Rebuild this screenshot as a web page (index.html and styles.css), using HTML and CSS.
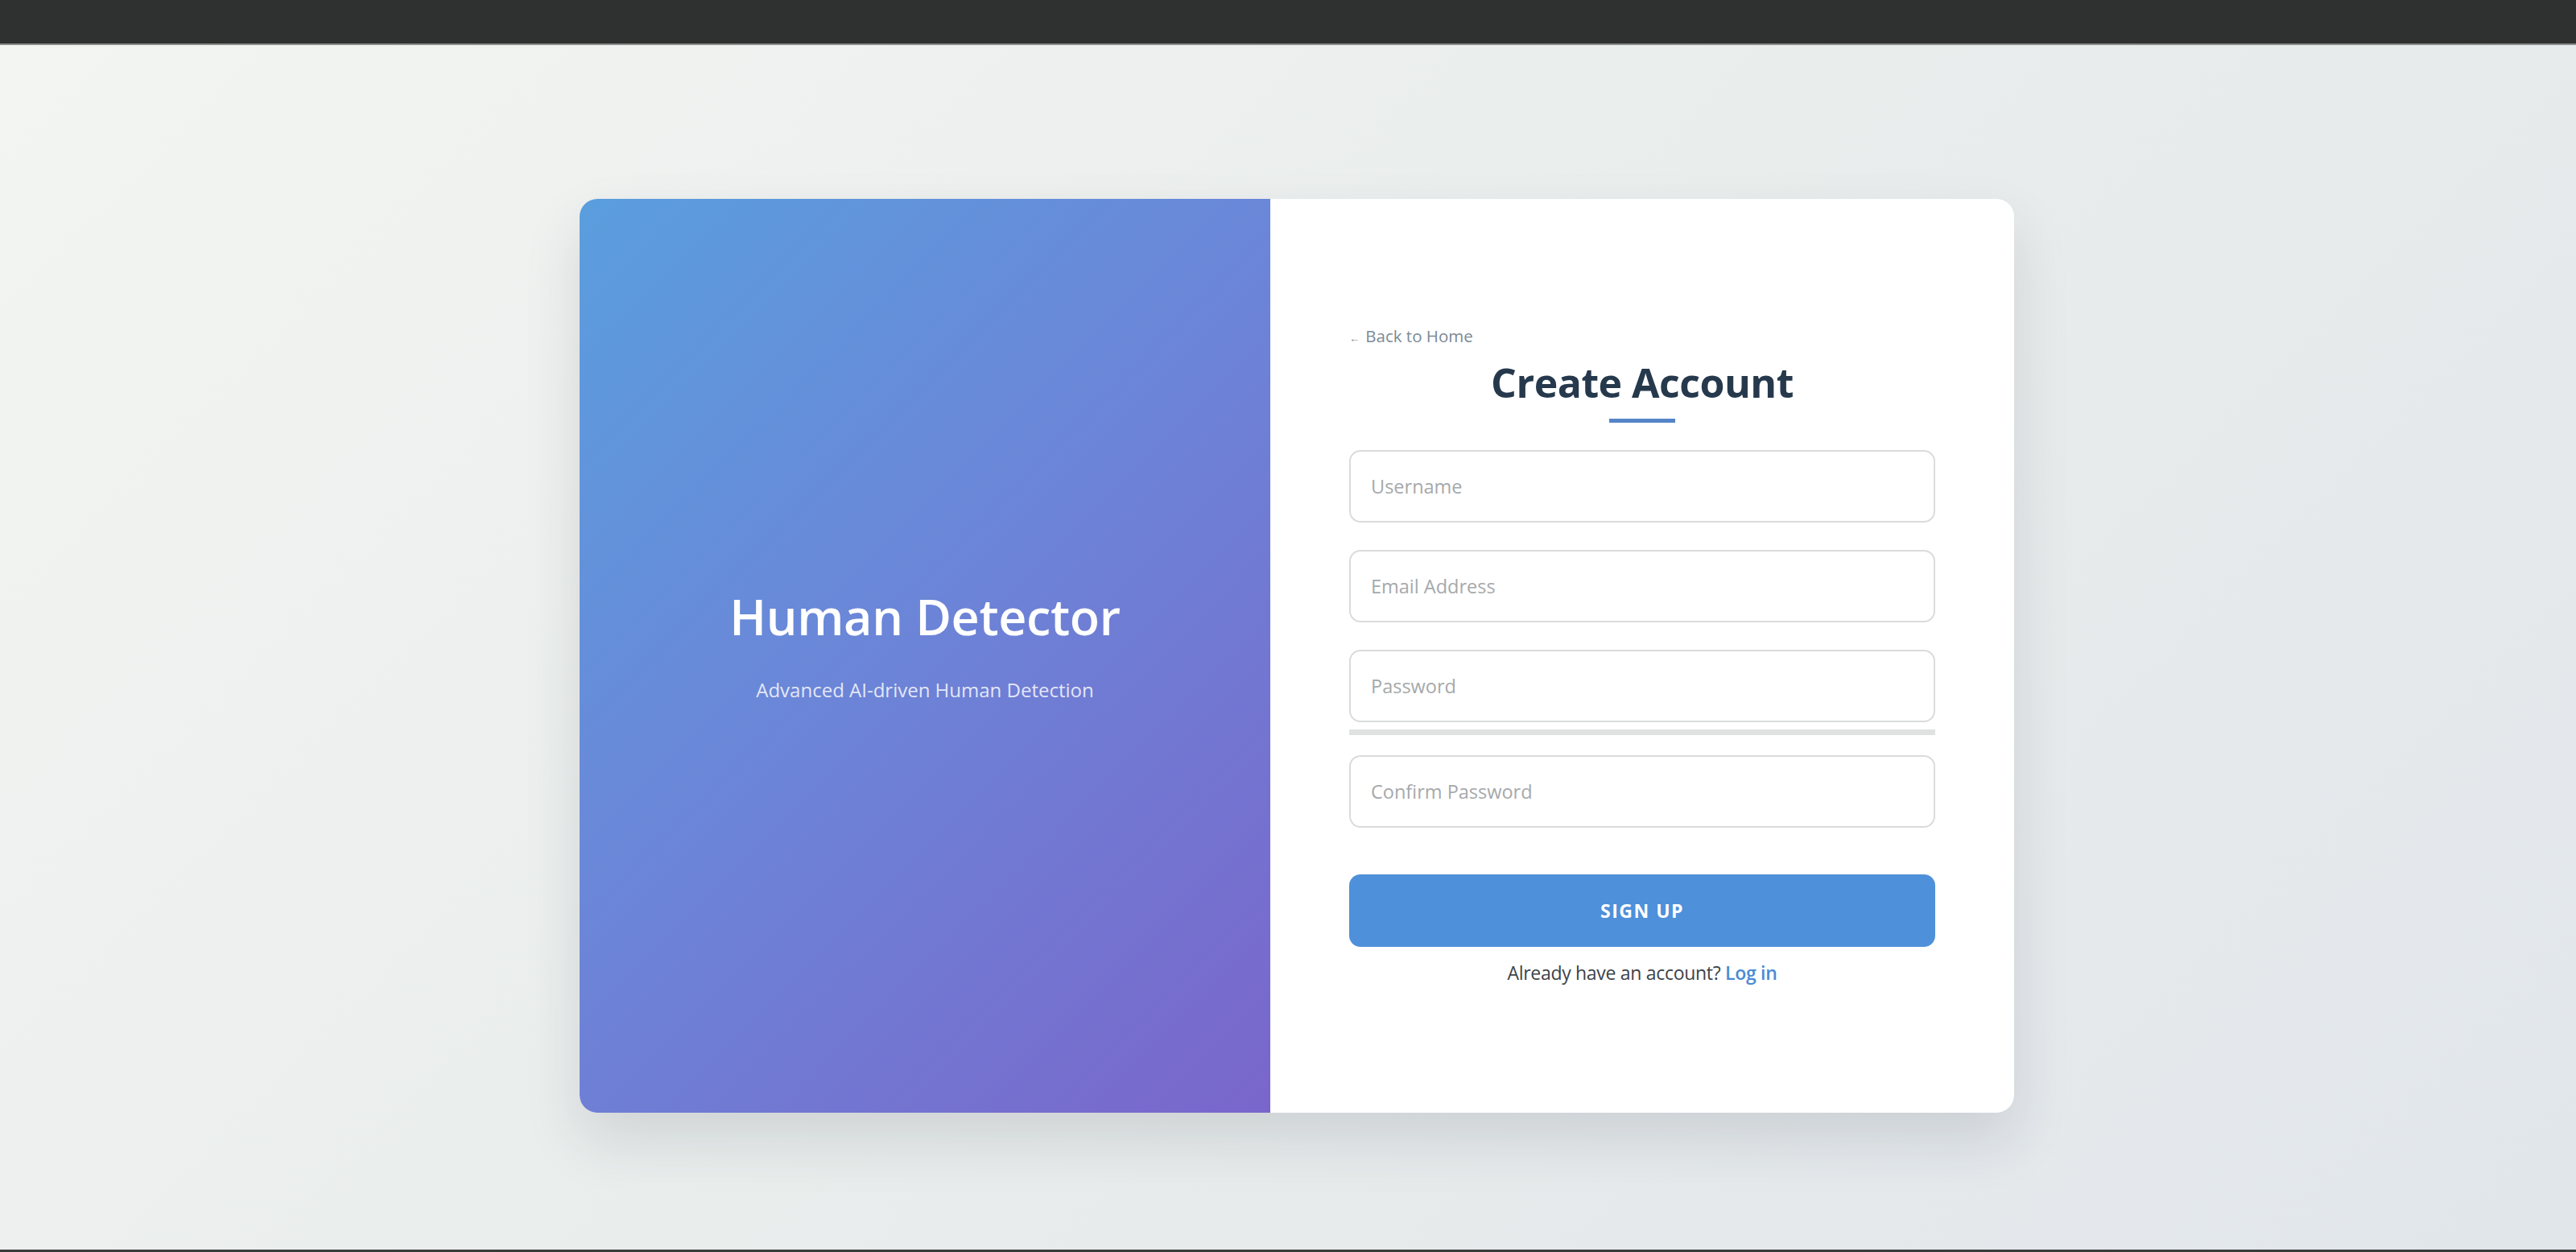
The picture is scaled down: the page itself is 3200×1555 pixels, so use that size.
FILE: index.html
```html
<!DOCTYPE html>
<html lang="en">
<head>
  <meta charset="UTF-8" />
  <meta name="viewport" content="width=device-width, initial-scale=1.0" />
  <title>Sign Up - Human Detector</title>
  <link rel="stylesheet" href="styles.css">
</head>
<body>
  <div class="topbar"></div>

  <main class="page">
    <div class="auth-card">
      <section class="brand-panel">
        <h1>Human Detector</h1>
        <p>Advanced AI-driven Human Detection</p>
      </section>

      <section class="form-panel">
        <a class="back-link" href="#"><span class="arrow">&larr;</span> Back to Home</a>
        <h2>Create Account</h2>
        <div class="title-bar"></div>

        <form class="signup-form">
          <input type="text" class="field" placeholder="Username">
          <input type="email" class="field" placeholder="Email Address">
          <input type="password" class="field field-password" placeholder="Password">
          <div class="strength-bar"></div>
          <input type="password" class="field field-confirm" placeholder="Confirm Password">
          <button type="button" class="signup-btn">Sign Up</button>
        </form>

        <p class="switch-text">Already have an account? <a href="#">Log in</a></p>
      </section>
    </div>
  </main>

  <div class="bottom-line"></div>
</body>
</html>
```

FILE: styles.css
```css
* {
  box-sizing: border-box;
  margin: 0;
  padding: 0;
}
html, body {
  height: 100%;
}
body {
  font-family: "Open Sans", "Noto Sans", sans-serif;
  display: flex;
  flex-direction: column;
  background: linear-gradient(135deg, #f3f5f2 0%, #e9edec 50%, #e1e6eb 100%);
  overflow: hidden;
}
.topbar {
  height: 56px;
  flex-shrink: 0;
  background: #2e312f;
  border-bottom: 2px solid #8a8d8a;
}
.bottom-line {
  height: 3px;
  flex-shrink: 0;
  background: #3a3c3b;
}
.page {
  flex: 1;
  display: flex;
  justify-content: center;
  align-items: center;
  padding: 21px 0 0 22px;
}
.auth-card {
  display: flex;
  width: 1782px;
  height: 1135px;
  border-radius: 22px;
  overflow: hidden;
  background: #fff;
  box-shadow: 0 34px 70px rgba(40, 50, 60, 0.13);
}
.brand-panel {
  width: 858px;
  flex-shrink: 0;
  display: flex;
  flex-direction: column;
  justify-content: center;
  align-items: center;
  padding-bottom: 26px;
  background: linear-gradient(135deg, #5a9ede 0%, #6b86d8 45%, #7a66cb 100%);
  color: #fff;
}
.brand-panel h1 {
  font-size: 61px;
  font-weight: 600;
  line-height: 72px;
  letter-spacing: -0.3px;
}
.brand-panel p {
  margin-top: 38px;
  font-size: 24px;
  color: rgba(255, 255, 255, 0.82);
}
.form-panel {
  flex: 1;
  display: flex;
  flex-direction: column;
  justify-content: center;
  padding: 0 98px 0 98px;
}
.back-link {
  display: block;
  font-size: 20.5px;
  line-height: 24px;
  color: #7b8a95;
  text-decoration: none;
}
.back-link .arrow {
  font-size: 13px;
  margin-right: 2px;
}
.form-panel h2 {
  margin-top: 13px;
  text-align: center;
  font-size: 50px;
  line-height: 60px;
  font-weight: 700;
  color: #26394c;
  letter-spacing: -0.5px;
}
.title-bar {
  width: 82px;
  height: 5px;
  margin: 15px auto 0;
  background: #5585c8;
}
.signup-form {
  display: flex;
  flex-direction: column;
  margin-top: 34px;
}
.field {
  height: 90px;
  padding: 0 25px;
  margin-bottom: 34px;
  border: 2px solid #dadcdc;
  border-radius: 14px;
  font-family: inherit;
  font-size: 23.5px;
  color: #333;
  background: #fff;
  outline: none;
}
.field::placeholder {
  color: #a5a9ab;
}
.field-password {
  margin-bottom: 9px;
}
.strength-bar {
  height: 7px;
  background: #e0e1e1;
  margin-bottom: 25px;
}
.field-confirm {
  margin-bottom: 58px;
}
.signup-btn {
  height: 90px;
  border: none;
  border-radius: 14px;
  background: #4e90da;
  color: #fff;
  font-family: inherit;
  font-size: 23px;
  font-weight: 700;
  letter-spacing: 1.5px;
  text-transform: uppercase;
  cursor: pointer;
}
.switch-text {
  margin-top: 16px;
  text-align: center;
  font-size: 23px;
  color: #3d4348;
  letter-spacing: -0.3px;
}
.switch-text a {
  color: #4a8ad4;
  font-weight: 600;
  text-decoration: none;
}
```
